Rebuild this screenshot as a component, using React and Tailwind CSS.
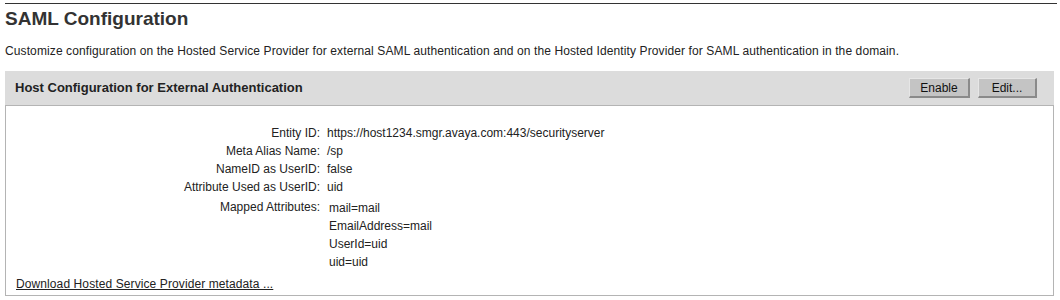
export default function App() {
  const rows = [
    ["Entity ID:", "https://host1234.smgr.avaya.com:443/securityserver"],
    ["Meta Alias Name:", "/sp"],
    ["NameID as UserID:", "false"],
    ["Attribute Used as UserID:", "uid"],
  ];
  const mapped = ["mail=mail", "EmailAddress=mail", "UserId=uid", "uid=uid"];

  return (
    <div className="w-[1060px] h-[300px] bg-white px-[5px] pt-[3px] font-['Liberation_Sans',Arial,sans-serif] text-[#222]">
      <div className="w-[1052px] border-t border-[#333]" />
      <h1 className="text-[19px] font-bold leading-[24px] text-[#333] mt-[3px]">SAML Configuration</h1>
      <p className="text-[12px] leading-[14px] mt-[13px] tracking-[0.11px]">
        Customize configuration on the Hosted Service Provider for external SAML authentication and on the Hosted Identity Provider for SAML authentication in the domain.
      </p>

      <section className="w-[1049px] mt-[13px]">
        <div className="h-[35px] bg-[#dcdcdc] border-b border-[#b4b4b4] flex items-center justify-between pl-[10px] pr-[17px]">
          <h2 className="text-[13px] font-bold text-[#222]">Host Configuration for External Authentication</h2>
          <div className="flex gap-[8px]">
            <button className="w-[61px] h-[20px] bg-[#c4c4c4] text-[12px] text-[#111] border border-t-[#e6e6e6] border-l-[#e6e6e6] border-r-[#8a8a8a] border-b-[#8a8a8a] border-r-[2px] border-b-[2px]">
              Enable
            </button>
            <button className="w-[59px] h-[20px] bg-[#c4c4c4] text-[12px] text-[#111] border border-t-[#e6e6e6] border-l-[#e6e6e6] border-r-[#8a8a8a] border-b-[#8a8a8a] border-r-[2px] border-b-[2px]">
              Edit...
            </button>
          </div>
        </div>

        <div className="border-x border-b border-[#b4b4b4] h-[190px] pt-[18px] px-[10px] text-[12px] leading-[18px]">
          {rows.map(([k, v]) => (
            <div key={k} className="flex">
              <div className="w-[304px] text-right">{k}</div>
              <div className="ml-[7px]">{v}</div>
            </div>
          ))}
          <div className="flex mt-[2px]">
            <div className="w-[304px] text-right">Mapped Attributes:</div>
            <div className="ml-[9px] pt-[1px]">
              {mapped.map((m) => (
                <div key={m}>{m}</div>
              ))}
            </div>
          </div>
          <a href="#" className="block underline mt-[4px] text-[#222] tracking-[0.1px]">
            Download Hosted Service Provider metadata ...
          </a>
        </div>
      </section>
    </div>
  );
}
